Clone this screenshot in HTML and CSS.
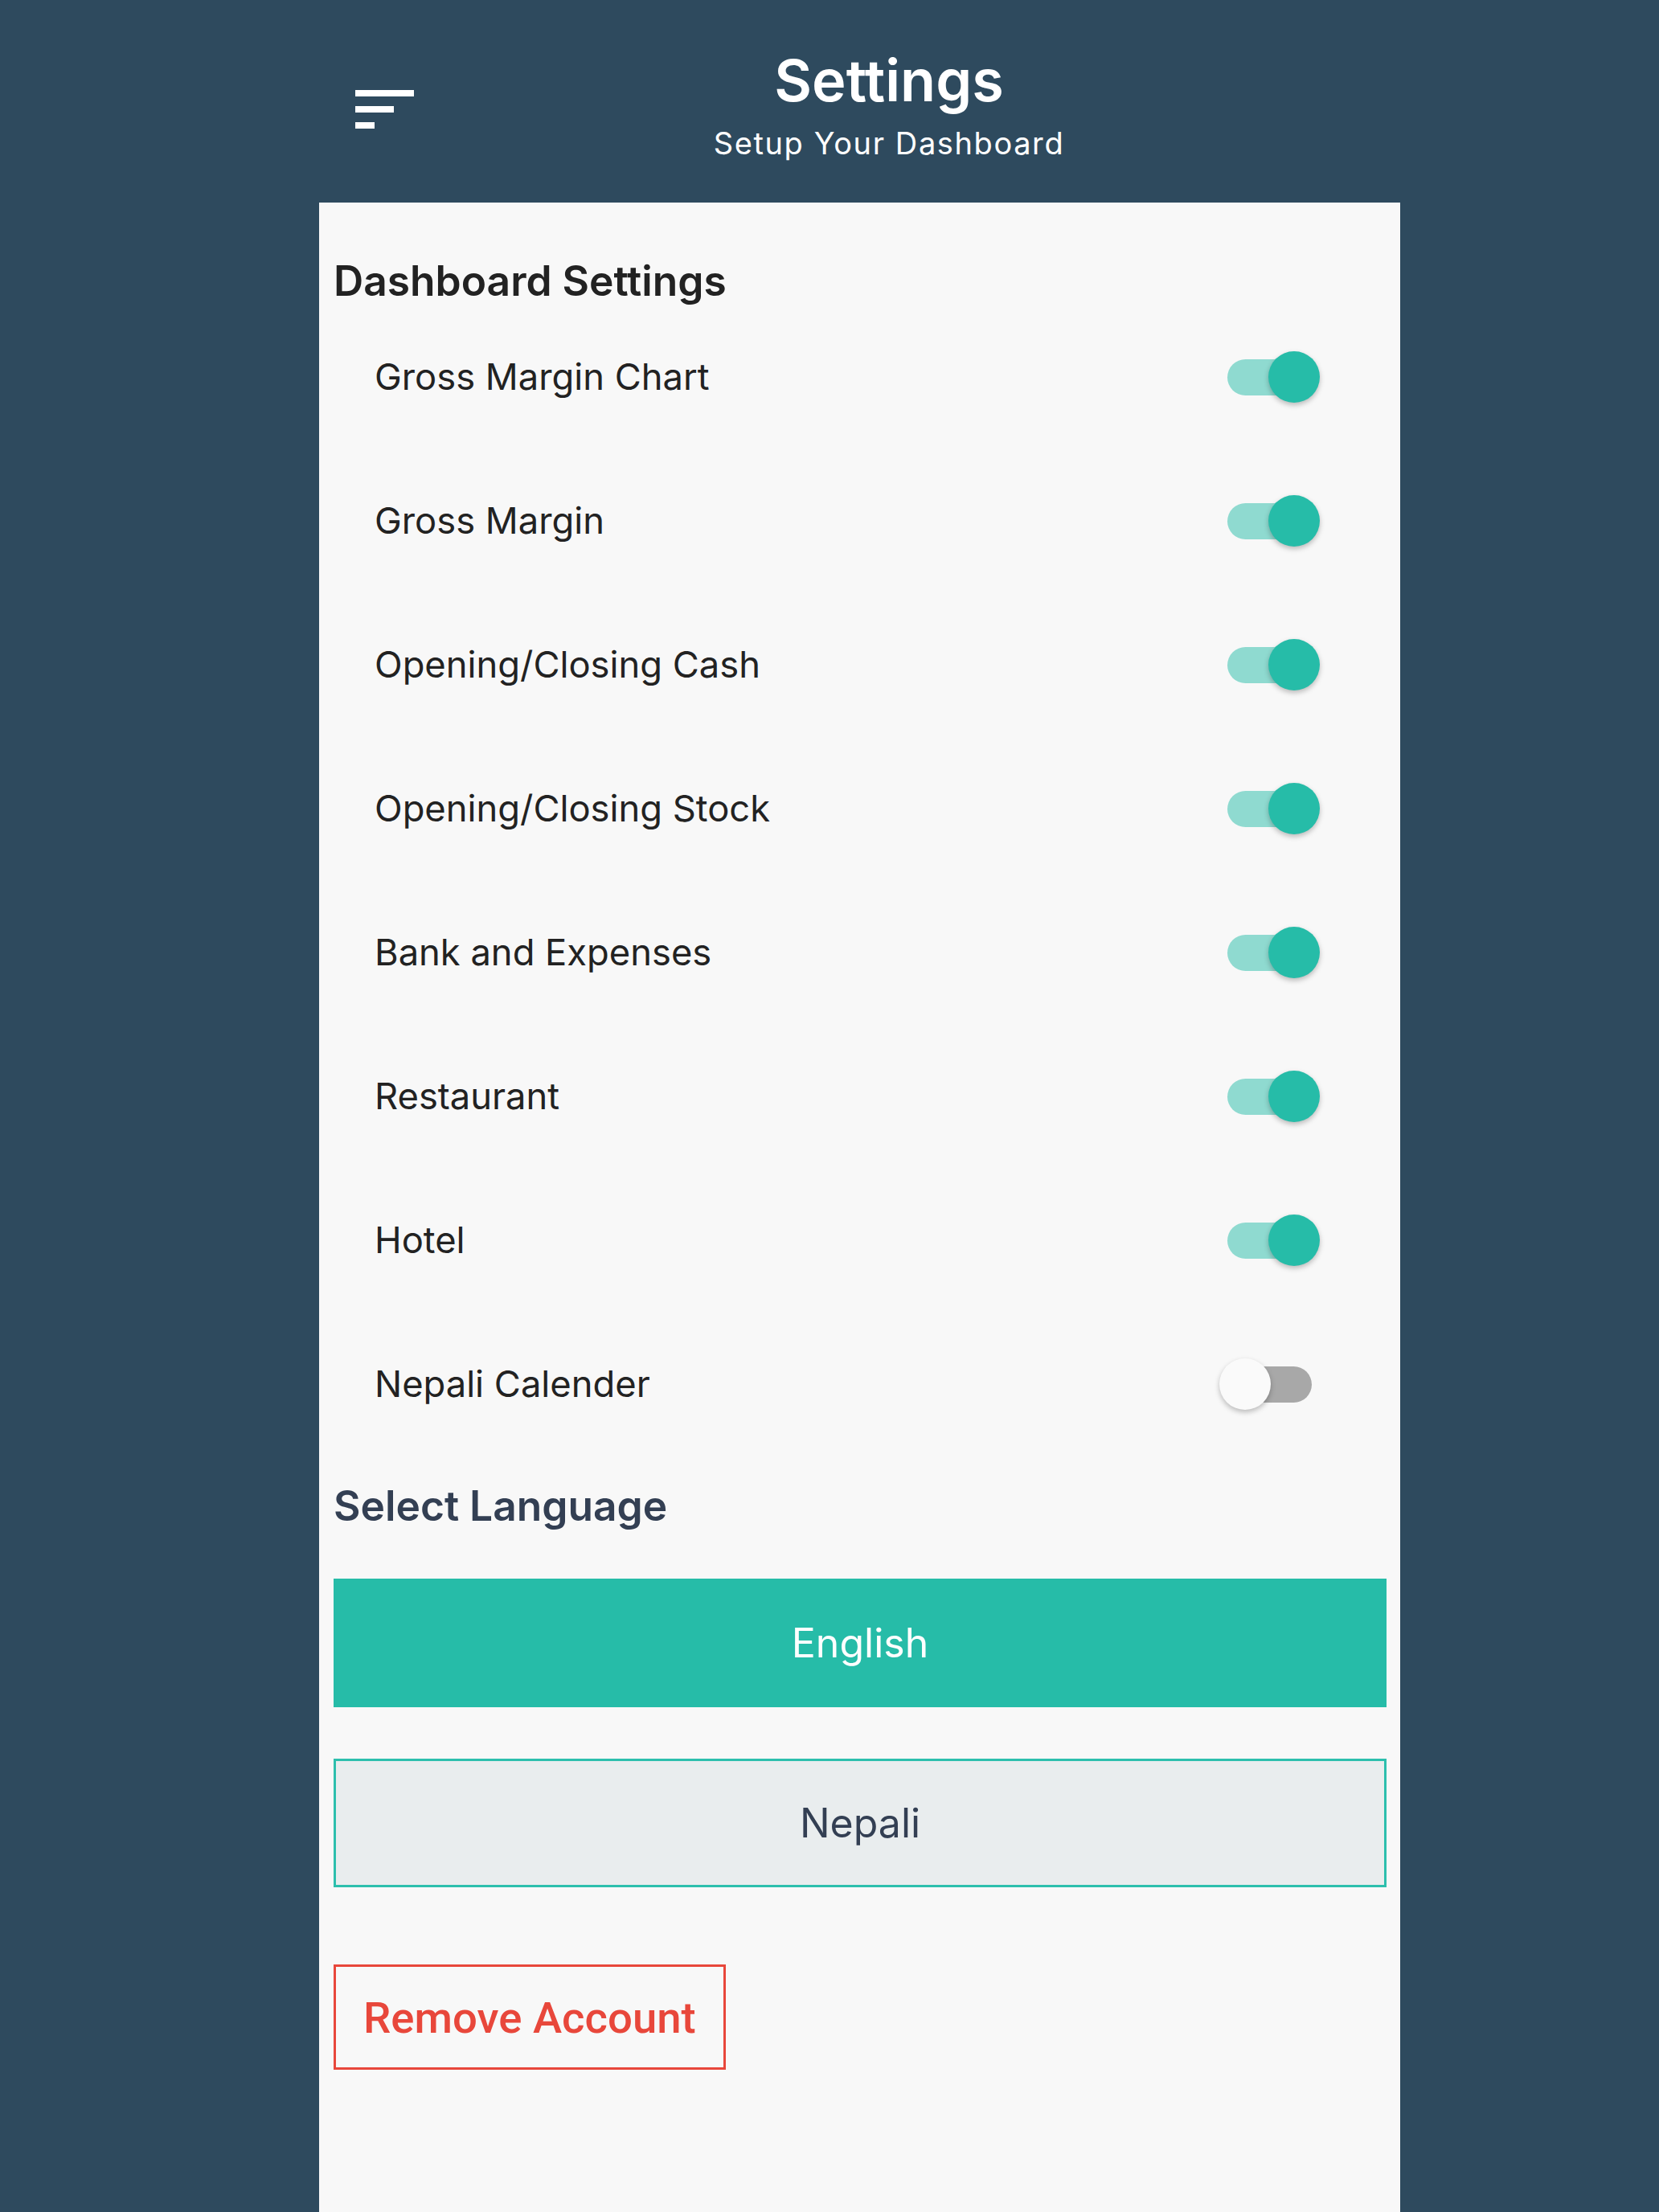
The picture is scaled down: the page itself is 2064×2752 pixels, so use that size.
FILE: index.html
```html
<!DOCTYPE html>
<html lang="en">
<head>
    <meta charset="UTF-8">
    <meta name="viewport" content="width=device-width, initial-scale=1.0">
    <title>Settings</title>
    <link rel="stylesheet" href="styles.css">
</head>
<body>

    <div class="page">
        <!-- Top Bar -->
        <header class="top-bar">
            <div class="menu-icon">
                <span class="bar-long"></span>
                <span class="bar-mid"></span>
                <span class="bar-short"></span>
            </div>
            <div class="top-title">
                <h1>Settings</h1>
                <p>Setup Your Dashboard</p>
            </div>
        </header>

        <main class="card">
            <h2 class="section-title">Dashboard Settings</h2>

            <!-- Dashboard toggles -->
            <ul class="setting-list">
                <li class="setting-row">
                    <span>Gross Margin Chart</span>
                    <span class="switch on"><span class="track"></span><span class="thumb"></span></span>
                </li>
                <li class="setting-row">
                    <span>Gross Margin</span>
                    <span class="switch on"><span class="track"></span><span class="thumb"></span></span>
                </li>
                <li class="setting-row">
                    <span>Opening/Closing Cash</span>
                    <span class="switch on"><span class="track"></span><span class="thumb"></span></span>
                </li>
                <li class="setting-row">
                    <span>Opening/Closing Stock</span>
                    <span class="switch on"><span class="track"></span><span class="thumb"></span></span>
                </li>
                <li class="setting-row">
                    <span>Bank and Expenses</span>
                    <span class="switch on"><span class="track"></span><span class="thumb"></span></span>
                </li>
                <li class="setting-row">
                    <span>Restaurant</span>
                    <span class="switch on"><span class="track"></span><span class="thumb"></span></span>
                </li>
                <li class="setting-row">
                    <span>Hotel</span>
                    <span class="switch on"><span class="track"></span><span class="thumb"></span></span>
                </li>
                <li class="setting-row">
                    <span>Nepali Calender</span>
                    <span class="switch"><span class="track"></span><span class="thumb"></span></span>
                </li>
            </ul>

            <!-- Language Section -->
            <h2 class="section-title lang-title">Select Language</h2>
            <button class="lang-btn active">English</button>
            <button class="lang-btn">Nepali</button>

            <button class="remove-btn">Remove Account</button>
        </main>
    </div>

    <script>
        // Flip a switch when it is clicked
        document.querySelectorAll('.switch').forEach(function (sw) {
            sw.addEventListener('click', function () {
                sw.classList.toggle('on');
            });
        });

        // Only one language can be active
        document.querySelectorAll('.lang-btn').forEach(function (btn) {
            btn.addEventListener('click', function () {
                document.querySelectorAll('.lang-btn').forEach(function (b) {
                    b.classList.remove('active');
                });
                btn.classList.add('active');
            });
        });
    </script>

</body>
</html>
```

FILE: styles.css
```css
/* General Styling */
body {
    font-family: Inter, "Noto Sans", sans-serif;
    background-color: #2e4a5e;
    margin: 0;
    padding: 0;
}

.page {
    margin: 0 322px 0 397px;
}

/* Top Bar */
.top-bar {
    display: flex;
    align-items: flex-start;
    height: 252px;
}

.menu-icon {
    display: flex;
    flex-direction: column;
    gap: 12px;
    width: 73px;
    margin: 112px 0 0 45px;
}

.menu-icon span {
    display: block;
    height: 8px;
    background-color: #fff;
}

.bar-long { width: 73px; }
.bar-mid { width: 48px; }
.bar-short { width: 24px; }

.top-title {
    flex: 1;
    text-align: center;
    padding-right: 45px;
    color: #fff;
}

.top-title h1 {
    margin: 0;
    padding-top: 57px;
    font-size: 72px;
    line-height: 86px;
    font-weight: 600;
}

.top-title p {
    margin: 12px 0 0;
    font-size: 38px;
    line-height: 46px;
    letter-spacing: 1.6px;
}

/* Card */
.card {
    display: flex;
    flex-direction: column;
    align-items: flex-start;
    min-height: 2500px;
    box-sizing: border-box;
    padding: 67px 17px 40px 18px;
    background-color: #f8f8f8;
}

.section-title {
    margin: 0;
    font-size: 51.5px;
    line-height: 60px;
    font-weight: 600;
    color: #222;
}

.setting-list {
    list-style: none;
    margin: 0;
    padding: 0;
    width: 100%;
}

.setting-row {
    display: flex;
    align-items: center;
    justify-content: space-between;
    height: 179px;
    padding-left: 51px;
    font-size: 45.3px;
    color: #222;
}

/* Switch */
.switch {
    position: relative;
    width: 125px;
    height: 64px;
    margin-right: 83px;
    cursor: pointer;
}

.track {
    position: absolute;
    left: 10px;
    top: 10px;
    width: 105px;
    height: 45px;
    border-radius: 23px;
    background-color: #a8a8a8;
}

.thumb {
    position: absolute;
    top: 0;
    left: 0;
    width: 64px;
    height: 64px;
    border-radius: 50%;
    background-color: #fafafa;
    box-shadow: 0 3px 6px rgba(0, 0, 0, 0.25);
    transition: left 0.2s ease;
}

.switch.on .track {
    background-color: #8fdad0;
}

.switch.on .thumb {
    left: 61px;
    background-color: #26bca8;
}

/* Language Buttons */
.lang-title {
    margin-top: 32px;
    color: #333f53;
}

.lang-btn {
    display: block;
    width: 100%;
    height: 160px;
    margin-top: 64px;
    font-family: inherit;
    font-size: 50px;
    color: #333f53;
    background-color: #e9edee;
    border: 3px solid #2dbfad;
    cursor: pointer;
}

.lang-btn.active {
    margin-top: 61px;
    color: #fff;
    background-color: #26bca8;
    border-color: #26bca8;
}

/* Remove Account */
.remove-btn {
    height: 131px;
    margin-top: 96px;
    padding: 0 34px;
    font-family: Roboto, "Liberation Sans", sans-serif;
    font-size: 54.5px;
    font-weight: 500;
    color: #e8473b;
    background-color: transparent;
    border: 3px solid #e8473b;
    cursor: pointer;
}
```
